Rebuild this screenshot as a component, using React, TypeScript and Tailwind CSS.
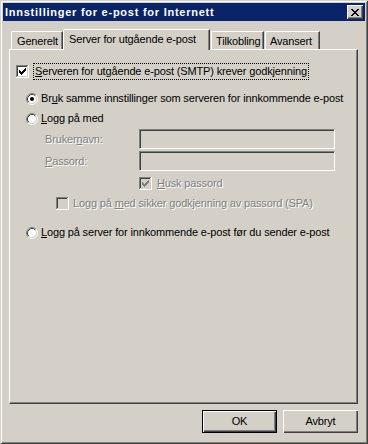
import React from 'react';

const font = { fontFamily: '"Liberation Sans", Arial, sans-serif' };

const Radio = ({ checked }: { checked?: boolean }) => (
  <svg width="12" height="12" viewBox="0 0 12 12" className="shrink-0">
    <circle cx="6" cy="6" r="4.5" fill="#ffffff" />
    <path d="M2.11 9.89 A5.5 5.5 0 0 1 9.89 2.11" stroke="#808080" fill="none" />
    <path d="M9.89 2.11 A5.5 5.5 0 0 1 2.11 9.89" stroke="#ffffff" fill="none" />
    <path d="M2.82 9.18 A4.5 4.5 0 0 1 9.18 2.82" stroke="#404040" fill="none" />
    <path d="M9.18 2.82 A4.5 4.5 0 0 1 2.82 9.18" stroke="#d4d0c8" fill="none" />
    {checked && <circle cx="6" cy="6" r="2" fill="#000000" />}
  </svg>
);

const Check = ({ checked, disabled }: { checked?: boolean; disabled?: boolean }) => (
  <svg width="13" height="13" viewBox="0 0 13 13" className="shrink-0" shapeRendering="crispEdges">
    <rect x="0" y="0" width="13" height="13" fill="#ffffff" />
    <rect x="0" y="0" width="12" height="12" fill="#808080" />
    <rect x="1" y="1" width="11" height="11" fill="#d4d0c8" />
    <rect x="1" y="1" width="10" height="10" fill="#404040" />
    <rect x="2" y="2" width="9" height="9" fill={disabled ? '#d4d0c8' : '#ffffff'} />
    {checked && (
      <path
        d="M9 3h1v1h-1z M8 4h2v1h-2z M3 5h1v1h-1z M7 5h3v1h-3z M3 6h2v1h-2z M6 6h3v1h-3z M3 7h5v1h-5z M4 8h3v1h-3z M5 9h1v1h-1z"
        fill={disabled ? '#808080' : '#000000'}
      />
    )}
  </svg>
);

const Field = () => (
  <div className="w-[196px] h-[20px] bg-[#d4d0c8] border border-t-[#808080] border-l-[#808080] border-r-white border-b-white shadow-[inset_1px_1px_#404040,inset_-1px_-1px_#d4d0c8]" />
);

const dim = 'text-[#808080] [text-shadow:1px_1px_0_#ffffff]';

const App = () => {
  return (
    <div
      className="w-[368px] h-[444px] bg-[#d4d0c8] p-[3px] flex flex-col text-[11px] tracking-[-0.15px] text-black leading-none shadow-[inset_1px_1px_#d4d0c8,inset_-1px_-1px_#404040,inset_2px_2px_#ffffff,inset_-2px_-2px_#808080]"
      style={font}
    >
      {/* title bar */}
      <div className="h-[18px] bg-[#0a246a] flex items-center justify-between pl-[2px] pr-[2px]">
        <span className="text-white font-bold text-[11px] tracking-[0.75px]">Innstillinger for e-post for Internett</span>
        <div className="w-[16px] h-[14px] bg-[#d4d0c8] flex items-center justify-center shadow-[inset_1px_1px_#ffffff,inset_-1px_-1px_#404040,inset_-2px_-2px_#808080]">
          <svg width="8" height="7" viewBox="0 0 8 7" shapeRendering="crispEdges">
            <path
              d="M0 0h2v1h-2z M6 0h2v1h-2z M1 1h2v1h-2z M5 1h2v1h-2z M2 2h4v1h-4z M3 3h2v1h-2z M2 4h4v1h-4z M1 5h2v1h-2z M5 5h2v1h-2z M0 6h2v1h-2z M6 6h2v1h-2z"
              fill="#000000"
            />
          </svg>
        </div>
      </div>

      <div className="flex-1 flex flex-col pl-[6px] pr-[7px] pt-[8px]">
        {/* tabs */}
        <div className="h-[20px] flex items-end pl-[2px]">
          <div className="w-[52px] h-[18px] border-l border-t border-white rounded-tl-[2px] shadow-[inset_-1px_0_#808080] border-r border-r-[#404040] flex items-center pl-[5px] pt-[1px]">
            Generelt
          </div>
          <div className="relative z-10 -mb-[1px] w-[147px] h-[21px] bg-[#d4d0c8] border-l border-t border-white rounded-tl-[2px] border-r border-r-[#404040] shadow-[inset_-1px_0_#808080] flex items-start pl-[5px] pt-[4px]">
            Server for utgående e-post
          </div>
          <div className="ml-[1px] w-[53px] h-[18px] border-l border-t border-white rounded-tl-[2px] border-r border-r-[#404040] shadow-[inset_-1px_0_#808080] flex items-center pl-[4px] pt-[1px]">
            Tilkobling
          </div>
          <div className="ml-[1px] w-[55px] h-[18px] border-l border-t border-white rounded-tl-[2px] border-r border-r-[#404040] shadow-[inset_-1px_0_#808080] flex items-center pl-[4px] pt-[1px]">
            Avansert
          </div>
        </div>

        {/* panel */}
        <div className="h-[355px] border-l border-t border-white border-r border-b border-r-[#404040] border-b-[#404040] shadow-[inset_-1px_-1px_#808080] flex flex-col pl-[6px]">
          <div className="mt-[13px] h-[17px] flex items-center">
            <Check checked />
            <span className="ml-[4px] h-[17px] px-[1px] flex items-center border border-dotted border-black">
              <span><u>S</u>erveren for utgående e-post (SMTP) krever godkjenning</span>
            </span>
          </div>

          <div className="mt-[10px] h-[17px] flex items-center pl-[10px]">
            <Radio checked />
            <span className="ml-[3px]">Br<u>u</u>k samme innstillinger som serveren for innkommende e-post</span>
          </div>

          <div className="mt-[3px] h-[17px] flex items-center pl-[10px]">
            <Radio />
            <span className="ml-[3px]"><u>L</u>ogg på med</span>
          </div>

          <div className="mt-[2px] h-[20px] flex items-center pl-[29px]">
            <span className={`w-[94px] ${dim}`}>Bruker<u>n</u>avn:</span>
            <Field />
          </div>

          <div className="mt-[2px] h-[20px] flex items-center pl-[29px]">
            <span className={`w-[94px] ${dim}`}><u>P</u>assord:</span>
            <Field />
          </div>

          <div className="mt-[5px] h-[15px] flex items-center pl-[123px]">
            <Check checked disabled />
            <span className={`ml-[5px] ${dim}`}><u>H</u>usk passord</span>
          </div>

          <div className="mt-[5px] h-[15px] flex items-center pl-[40px]">
            <Check disabled />
            <span className={`ml-[4px] ${dim}`}>Logg på <u>m</u>ed sikker godkjenning av passord (SPA)</span>
          </div>

          <div className="mt-[13px] h-[17px] flex items-center pl-[10px]">
            <Radio />
            <span className="ml-[3px]"><u>L</u>ogg på server for innkommende e-post før du sender e-post</span>
          </div>
        </div>

        {/* buttons */}
        <div className="mt-[6px] flex justify-end gap-[6px]">
          <button className="w-[75px] h-[23px] bg-[#d4d0c8] border border-black shadow-[inset_1px_1px_#ffffff,inset_-1px_-1px_#404040,inset_-2px_-2px_#808080] flex items-center justify-center">
            OK
          </button>
          <button className="w-[75px] h-[23px] bg-[#d4d0c8] shadow-[inset_1px_1px_#ffffff,inset_-1px_-1px_#404040,inset_-2px_-2px_#808080] flex items-center justify-center">
            Avbryt
          </button>
        </div>
      </div>
    </div>
  );
};

export default App;
